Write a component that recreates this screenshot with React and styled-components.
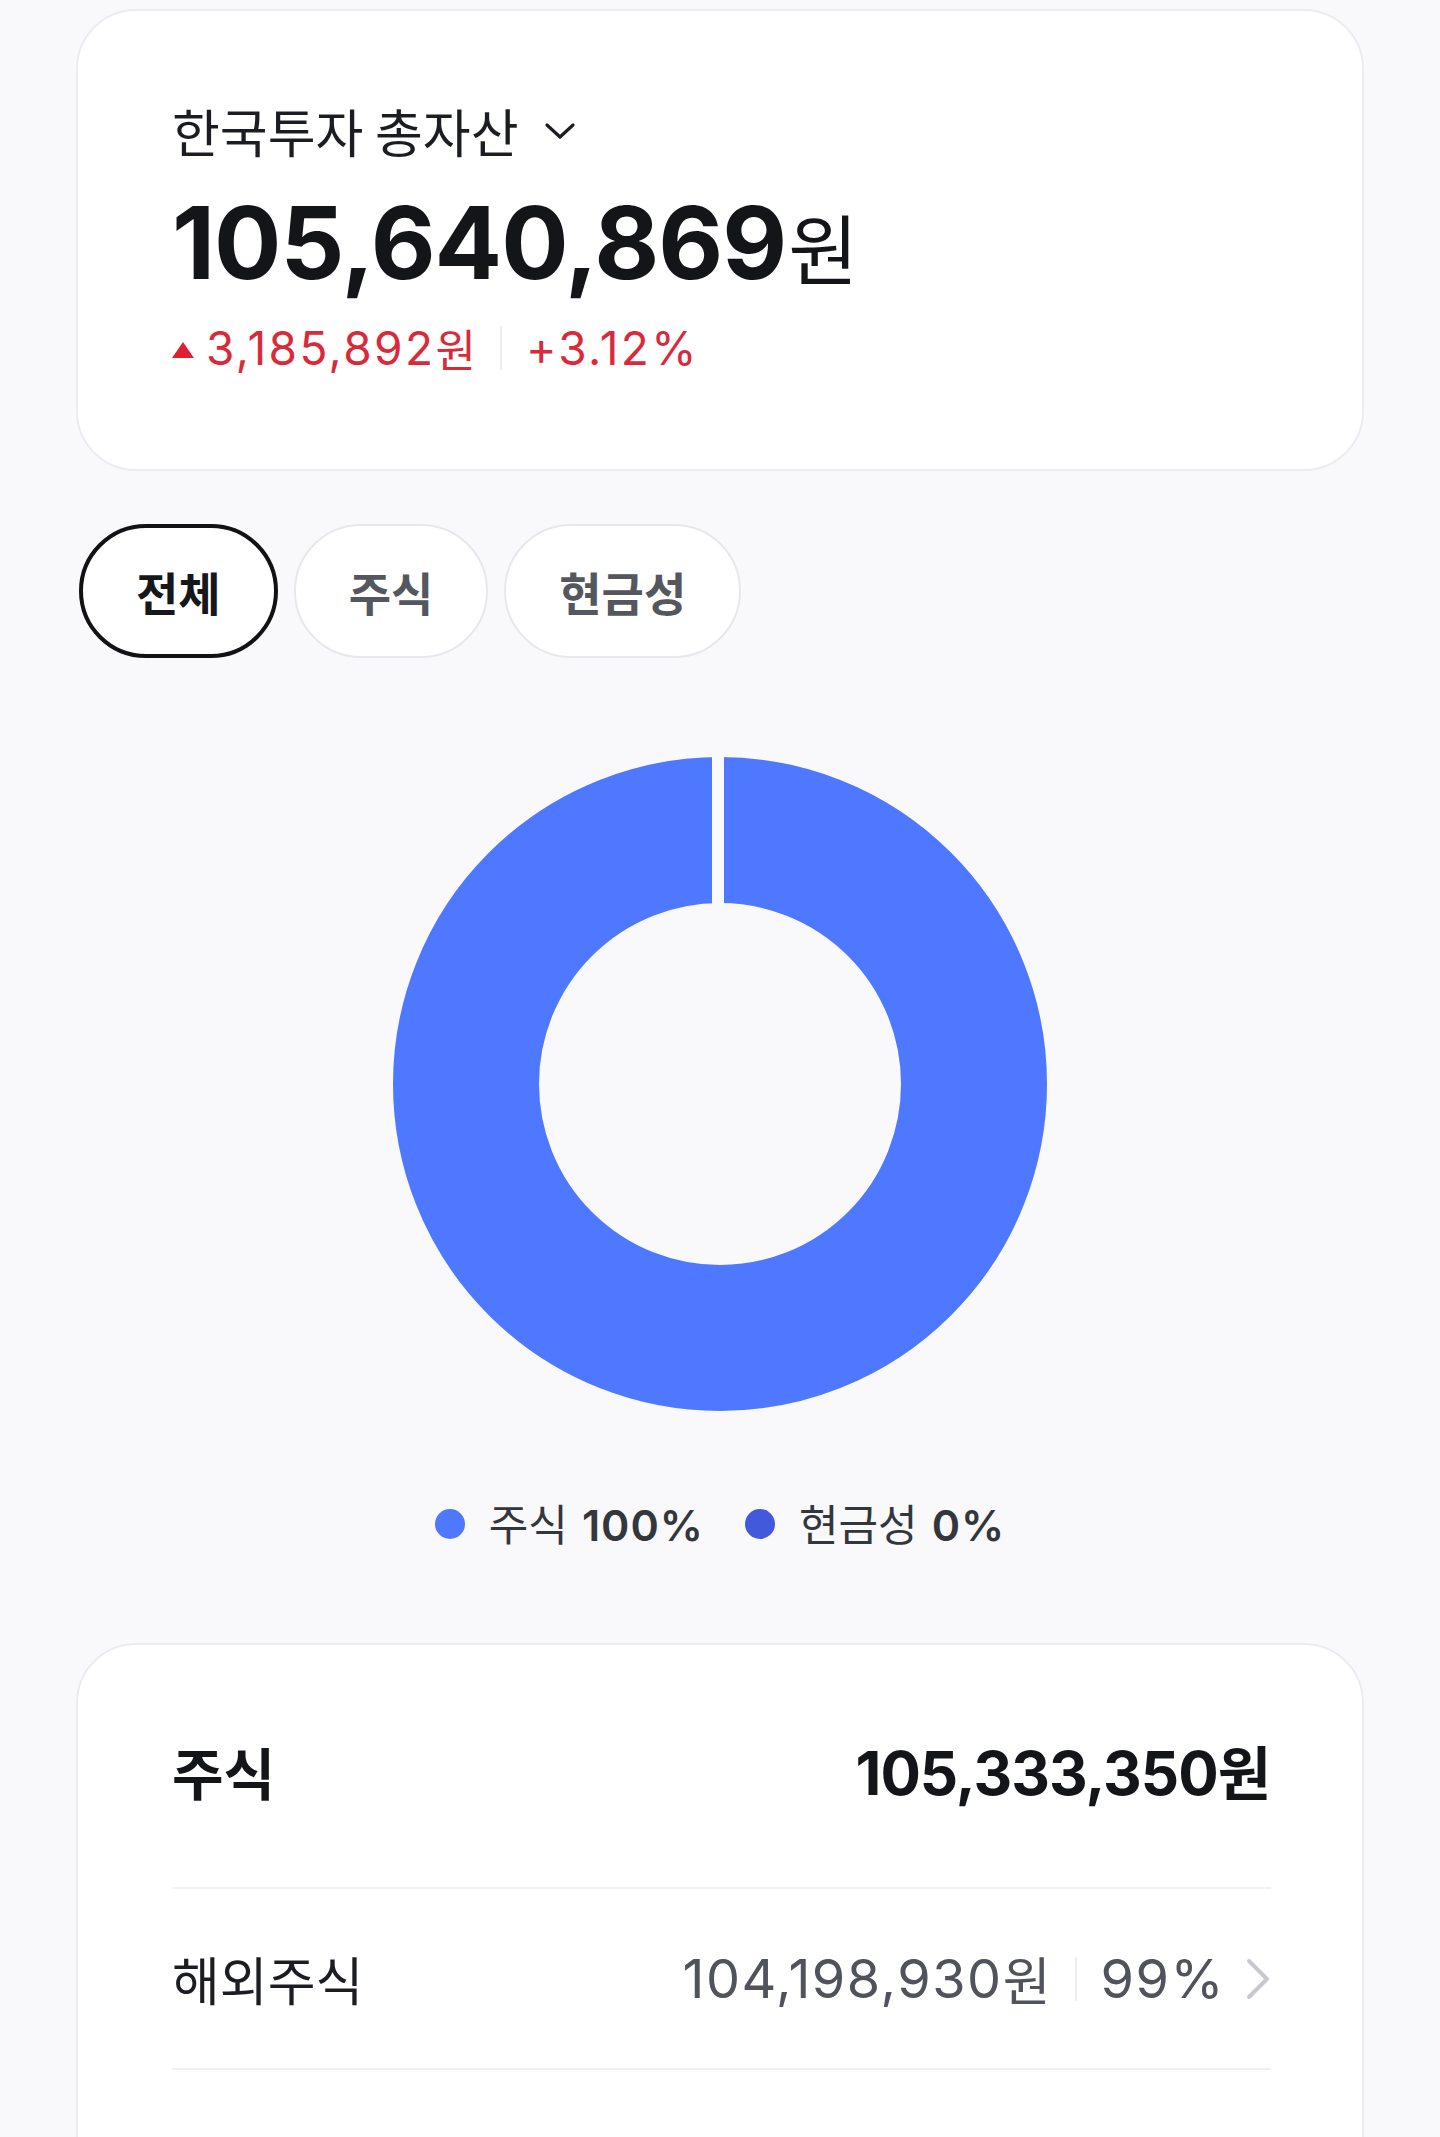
import React from "react";
import styled, { createGlobalStyle } from "styled-components";

const Global = createGlobalStyle`
  html, body { margin: 0; padding: 0; background: #f9f9fb; }
  body { font-family: "Inter", "Noto Sans CJK KR", sans-serif; color: #191b20; -webkit-font-smoothing: antialiased; }
  * { box-sizing: border-box; }
`;

const Page = styled.main`
  display: flex;
  flex-direction: column;
  padding: 9px 76px 0;
`;

const Card = styled.section`
  background: #fff;
  border: 2px solid #ebecef;
  border-radius: 60px;
  padding: ${(p) => p.$pad};
`;

const TitleRow = styled.div`
  display: flex;
  align-items: center;
  gap: 26px;
  font-family: "Noto Sans CJK KR", sans-serif;
  font-size: 52px;
  line-height: 64px;
  height: 64px;
  color: #1b1d22;
`;

const Amount = styled.div`
  margin-top: 20px;
  display: flex;
  align-items: baseline;
  font-size: 100px;
  line-height: 120px;
  font-weight: 700;
  color: #141519;
  letter-spacing: -1px;
`;

const Unit = styled.span`
  font-family: "Noto Sans CJK KR", sans-serif;
  font-weight: ${(p) => p.$weight || 400};
  font-size: ${(p) => p.$size};
  letter-spacing: 0;
  margin-left: ${(p) => p.$gap || "0"};
`;

const ChangeRow = styled.div`
  margin-top: 14px;
  display: flex;
  align-items: center;
  font-size: 46px;
  line-height: 56px;
  color: #d92a3b;
  letter-spacing: 2.4px;
`;

const UpMark = styled.span`
  width: 0;
  height: 0;
  border-left: 11px solid transparent;
  border-right: 11px solid transparent;
  border-bottom: 16px solid #e0202f;
  margin: 4px 12px 0 0;
`;

const VBar = styled.span`
  width: 2px;
  height: ${(p) => p.$h};
  background: #eceef1;
  margin: 0 ${(p) => p.$m};
`;

const Tabs = styled.div`
  display: flex;
  gap: 16px;
  margin-top: 53px;
  margin-left: 3px;
`;

const Tab = styled.button`
  height: 134px;
  padding: 0 ${(p) => (p.$active ? "53px" : "53px")};
  border-radius: 67px;
  border: ${(p) => (p.$active ? "4px solid #111214" : "2px solid #e7e8eb")};
  background: #fff;
  font-family: "Noto Sans CJK KR", sans-serif;
  font-size: 46px;
  font-weight: 700;
  color: ${(p) => (p.$active ? "#16171b" : "#55575f")};
  cursor: pointer;
`;

const ChartWrap = styled.div`
  display: flex;
  justify-content: center;
  margin-top: 99px;
`;

const Legend = styled.div`
  display: flex;
  justify-content: center;
  align-items: center;
  gap: 41px;
  margin-top: 83px;
  font-size: 43px;
  line-height: 56px;
  color: #33363d;
`;

const LegendItem = styled.div`
  display: flex;
  align-items: center;
  gap: 24px;
`;

const Dot = styled.span`
  width: 30px;
  height: 30px;
  border-radius: 50%;
  background: ${(p) => p.$c};
`;

const LegendLabel = styled.span`
  font-family: "Noto Sans CJK KR", sans-serif;
  font-weight: 400;
`;

const LegendPct = styled.span`
  font-weight: 600;
  margin-left: 14px;
  letter-spacing: 1px;
`;

const AssetCard = styled(Card)`
  margin-top: 90px;
`;

const GroupHead = styled.div`
  height: 144px;
  margin-bottom: 45px;
  display: flex;
  align-items: center;
  justify-content: space-between;
`;

const GroupName = styled.span`
  font-family: "Noto Sans CJK KR", sans-serif;
  font-size: 56px;
  font-weight: 700;
  color: #141519;
`;

const GroupValue = styled.span`
  font-size: 60px;
  font-weight: 700;
  color: #141519;
  letter-spacing: -1px;
  display: flex;
  align-items: baseline;
`;

const Divider = styled.div`
  height: 2px;
  background: #f0f1f3;
`;

const ItemRow = styled.div`
  height: 179px;
  display: flex;
  align-items: center;
  justify-content: space-between;
`;

const ItemName = styled.span`
  font-family: "Noto Sans CJK KR", sans-serif;
  font-size: 52px;
  color: #1b1d22;
`;

const ItemRight = styled.div`
  display: flex;
  align-items: center;
  font-size: 54px;
  color: #50535b;
  letter-spacing: 1.5px;
`;

const Spacer = styled.div`
  height: 140px;
`;

function ChevronDown() {
  return (
    <svg width="30" height="20" viewBox="0 0 30 20" fill="none">
      <path d="M2 4 L15 16 L28 4" stroke="#1b1d22" strokeWidth="3.2" strokeLinecap="round" strokeLinejoin="round" />
    </svg>
  );
}

function ChevronRight() {
  return (
    <svg width="26" height="42" viewBox="0 0 26 42" fill="none" style={{ marginLeft: 20 }}>
      <path d="M4 3 L22 21 L4 39" stroke="#c7c9ce" strokeWidth="4" strokeLinecap="round" strokeLinejoin="round" />
    </svg>
  );
}

function Donut() {
  const R = 327;
  const r = 181;
  const mid = (R + r) / 2;
  return (
    <svg width={R * 2} height={R * 2} viewBox={`0 0 ${R * 2} ${R * 2}`}>
      <circle cx={R} cy={R} r={mid} fill="none" stroke="#4e78ff" strokeWidth={R - r} />
      <rect x={R - 8} y={0} width={12} height={R - r + 2} fill="#f9f9fb" />
    </svg>
  );
}

export default function App() {
  return (
    <>
      <Global />
      <Page>
        <Card $pad="88px 94px 93px">
          <TitleRow>
            한국투자 총자산
            <ChevronDown />
          </TitleRow>
          <Amount>
            105,640,869<Unit $size="76px" $gap="2px">원</Unit>
          </Amount>
          <ChangeRow>
            <UpMark />
            3,185,892<Unit $size="44px">원</Unit>
            <VBar $h="44px" $m="24px" />
            +3.12%
          </ChangeRow>
        </Card>

        <Tabs>
          <Tab $active>전체</Tab>
          <Tab>주식</Tab>
          <Tab>현금성</Tab>
        </Tabs>

        <ChartWrap>
          <Donut />
        </ChartWrap>

        <Legend>
          <LegendItem>
            <Dot $c="#4e78ff" />
            <span>
              <LegendLabel>주식</LegendLabel>
              <LegendPct>100%</LegendPct>
            </span>
          </LegendItem>
          <LegendItem>
            <Dot $c="#4259dc" />
            <span>
              <LegendLabel>현금성</LegendLabel>
              <LegendPct>0%</LegendPct>
            </span>
          </LegendItem>
        </Legend>

        <AssetCard $pad="53px 91px 0 94px">
          <GroupHead>
            <GroupName>주식</GroupName>
            <GroupValue>
              105,333,350<Unit $size="58px" $weight={700}>원</Unit>
            </GroupValue>
          </GroupHead>
          <Divider />
          <ItemRow>
            <ItemName>해외주식</ItemName>
            <ItemRight>
              104,198,930<Unit $size="52px">원</Unit>
              <VBar $h="44px" $m="24px" />
              99%
              <ChevronRight />
            </ItemRight>
          </ItemRow>
          <Divider />
          <Spacer />
        </AssetCard>
      </Page>
    </>
  );
}
